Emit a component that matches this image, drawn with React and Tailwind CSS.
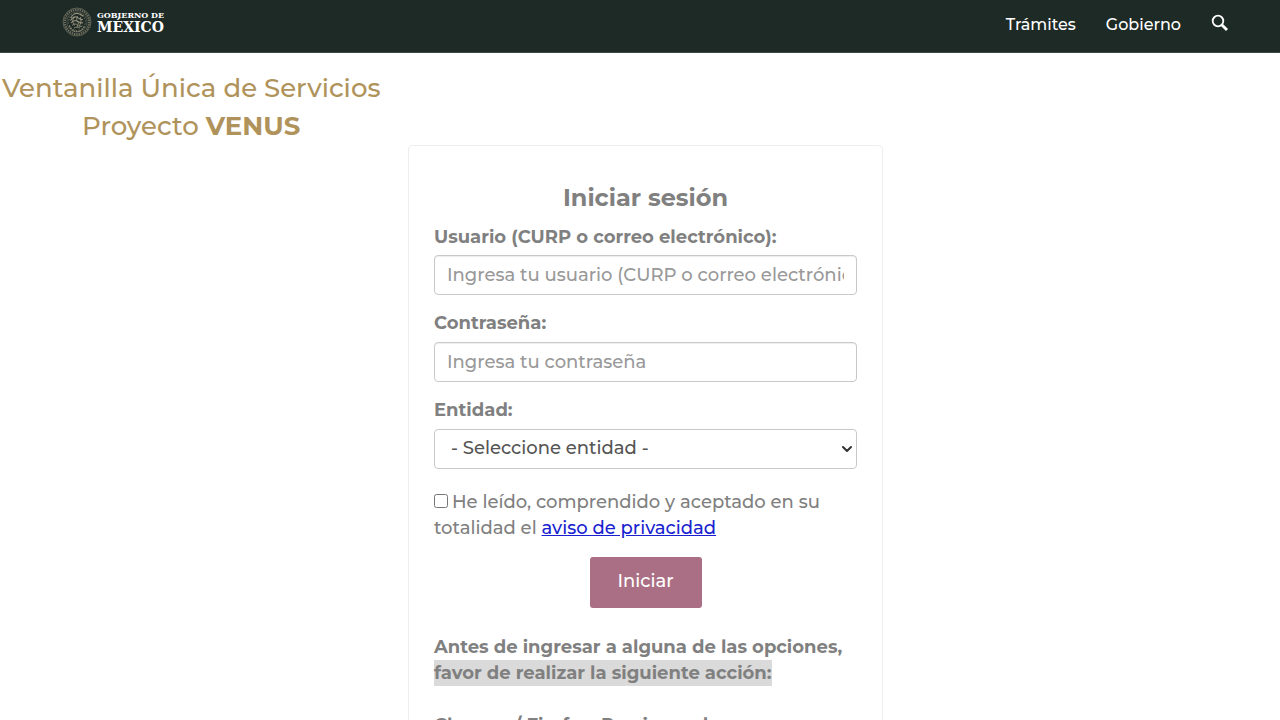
import { useState } from "react";
import { ChevronDown } from "lucide-react";

const entities = ["Ciudad de México", "Jalisco", "Nuevo León", "Puebla", "Veracruz"];

const inputClass =
  "block w-full h-10 px-3 bg-white border border-[#c9c9c9] rounded text-lg text-[#555] placeholder:text-[#999] shadow-[inset_0_1px_1px_rgba(0,0,0,0.075)] focus:outline-none focus:border-[#66afe9]";

const sealMarks = [0, 20, 40, 60, 80, 100, 120, 140, 160, 180, 200, 220, 240, 260, 280, 300, 320, 340];

function Seal() {
  return (
    <svg viewBox="0 0 30 30" className="size-[30px]" fill="none" stroke="#a29d85" aria-hidden="true">
      <circle cx="15" cy="15" r="14" strokeWidth="0.8" opacity="0.6" />
      <circle cx="15" cy="15" r="12.2" strokeWidth="2.2" strokeDasharray="1.4 0.9" opacity="0.6" />
      <circle cx="15" cy="15" r="10.2" strokeWidth="0.6" opacity="0.5" />
      {sealMarks.map((a) => (
        <path key={a} d="M15 5.5l1 1.8" strokeWidth="0.8" opacity="0.6" transform={`rotate(${a} 15 15)`} />
      ))}
      {/* eagle */}
      <path d="M9 11c1-3 4-5 7-4.5 2.5.4 3.5 2 5.5 2.5M8.5 13.5c2-3 5-4 7-3s3 2.5 5.5 2M9 16c2-2.5 4-3 6-2s3.5 3 6 1.5" strokeWidth="1.2" opacity="0.85" />
      <path d="M10 18.5c2-2 4-2 5.5-.5s3 2 5 1M12 21c1.5-1 4-1 6 0M15.5 9l-1 4 2 3-1.5 4M12 9.5l-1.5 5 2 4M18.5 10l.5 5-1.5 4" strokeWidth="0.9" opacity="0.85" />
      <path d="M7.5 19c1.5 4 4.5 5.5 7.5 5.5s6-1.5 7.5-5.5" strokeWidth="1.2" strokeDasharray="1.5 0.7" opacity="0.8" />
    </svg>
  );
}

function SearchIcon() {
  return (
    <svg viewBox="0 0 18 18" className="size-[18px]" fill="none" stroke="currentColor" aria-hidden="true">
      <circle cx="7" cy="7" r="5.3" strokeWidth="1.8" />
      <path d="M11 11l5 5" strokeWidth="2.8" />
    </svg>
  );
}

function Header() {
  return (
    <header className="h-[53px] bg-[#1e2a26] border-b border-[#3c4944] text-white">
      <div className="flex justify-between pl-[62px] pr-[51px]">
        <a href="#" className="flex items-center gap-[5px] pt-[7px]">
          <Seal />
          <span className="flex flex-col font-bold font-['DejaVu_Serif',serif]">
            <span className="text-[8px] leading-[10px]">GOBIERNO DE</span>
            <span className="text-sm leading-[15px]">MÉXICO</span>
          </span>
        </a>
        <nav className="flex items-center gap-[30px] pt-3 text-base">
          <a href="#">Trámites</a>
          <a href="#">Gobierno</a>
          <button type="button" aria-label="Buscar" className="pb-1">
            <SearchIcon />
          </button>
        </nav>
      </div>
    </header>
  );
}

export default function App() {
  const [user, setUser] = useState("");
  const [password, setPassword] = useState("");
  const [entity, setEntity] = useState("");
  const [accepted, setAccepted] = useState(false);

  return (
    <div className="h-screen overflow-hidden bg-white font-[Montserrat,Inter,sans-serif] font-medium text-[#808080]">
      <Header />
      <main>
        <h1 className="w-fit pt-4 pl-0.5 text-center text-[26px] leading-[38px] text-[#b0935b]">
          Ventanilla Única de Servicios
          <br />
          Proyecto <strong>VENUS</strong>
        </h1>

        <div className="pl-[11px]">
          <section className="max-w-[475px] mx-auto px-[25px] pt-9 pb-8 border border-[#eee] rounded-sm text-lg leading-[26px]">
            <form onSubmit={(e) => e.preventDefault()}>
              <h2 className="text-center text-2xl leading-8 font-bold">Iniciar sesión</h2>

              <label htmlFor="user" className="block mt-2.5 mb-[5px] font-bold">
                Usuario (CURP o correo electrónico):
              </label>
              <input
                id="user"
                type="text"
                placeholder="Ingresa tu usuario (CURP o correo electrónico)"
                value={user}
                onChange={(e) => setUser(e.target.value)}
                className={inputClass}
              />

              <label htmlFor="password" className="block mt-[15px] mb-1.5 font-bold">
                Contraseña:
              </label>
              <input
                id="password"
                type="password"
                placeholder="Ingresa tu contraseña"
                value={password}
                onChange={(e) => setPassword(e.target.value)}
                className={inputClass}
              />

              <label htmlFor="entity" className="block mt-[15px] mb-1.5 font-bold">
                Entidad:
              </label>
              <div className="relative">
                <select
                  id="entity"
                  value={entity}
                  onChange={(e) => setEntity(e.target.value)}
                  className="block w-full h-10 pl-4 pr-8 pb-0.5 appearance-none bg-white border border-[#c9c9c9] rounded text-lg text-[#555]"
                >
                  <option value="">- Seleccione entidad -</option>
                  {entities.map((name) => (
                    <option key={name} value={name}>
                      {name}
                    </option>
                  ))}
                </select>
                <ChevronDown
                  className="absolute right-0.5 top-3 size-4 text-[#333] pointer-events-none"
                  strokeWidth={3}
                />
              </div>

              <p className="mt-5">
                <label>
                  <input
                    type="checkbox"
                    checked={accepted}
                    onChange={(e) => setAccepted(e.target.checked)}
                    className="size-[14px] mr-1"
                  />
                  He leído, comprendido y aceptado en su totalidad el{" "}
                  <a href="#" className="text-[#1a1fd0] underline">
                    aviso de privacidad
                  </a>
                </label>
              </p>

              <button
                type="submit"
                className="block mx-auto mt-4 w-28 h-[51px] pb-1 bg-[#ab6f85] rounded-[3px] text-lg text-white"
              >
                Iniciar
              </button>
            </form>

            <p className="my-[26px] font-bold">
              Antes de ingresar a alguna de las opciones,{" "}
              <span className="py-0.5 bg-[#dadada]">favor de realizar la siguiente acción:</span>
            </p>
            <p className="font-bold">Chrome / Firefox: Presionando</p>
          </section>
        </div>
      </main>
    </div>
  );
}
